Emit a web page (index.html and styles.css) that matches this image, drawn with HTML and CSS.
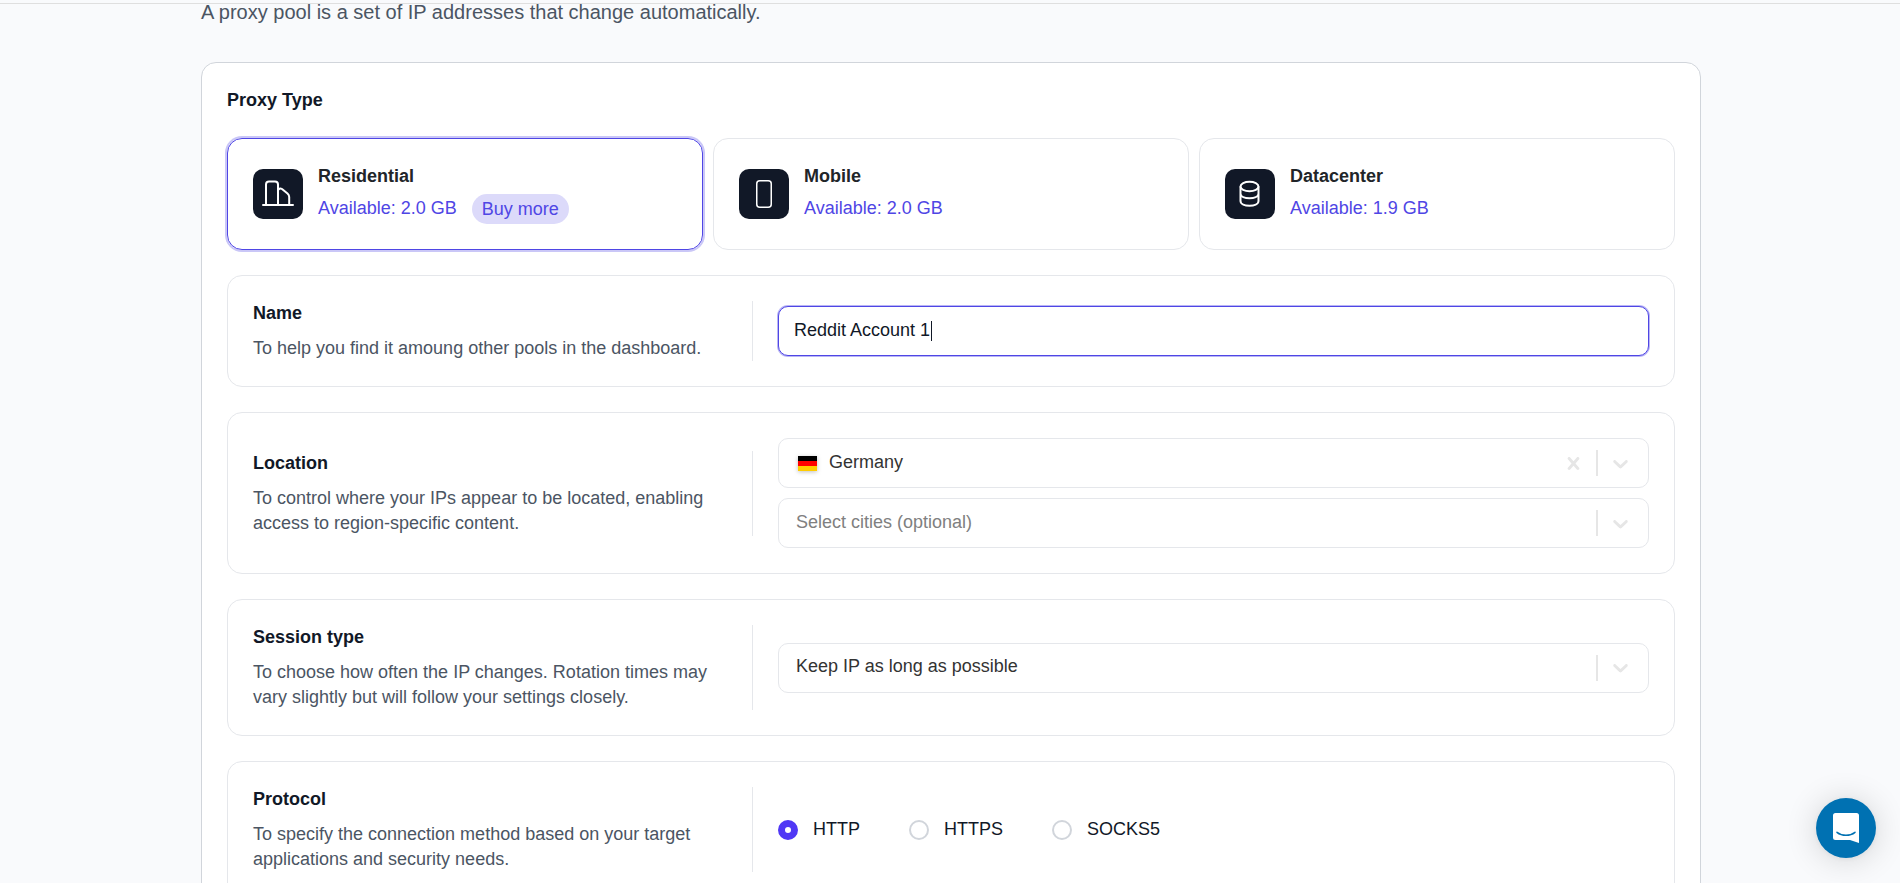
FILE: index.html
```html
<!DOCTYPE html>
<html lang="en">
<head>
<meta charset="utf-8">
<title>Create proxy pool</title>
<link rel="stylesheet" href="styles.css">
</head>
<body>
<header class="topbar"></header>
<main class="page">
  <p class="lead">A proxy pool is a set of IP addresses that change automatically.</p>
  <form class="panel">
    <h2 class="label">Proxy Type</h2>
    <div class="types">
      <article class="type selected">
        <span class="type-icon">
          <svg width="32" height="32" viewBox="0 0 32 32" fill="none" stroke="#fff" stroke-width="2" stroke-linecap="round" stroke-linejoin="round"><path d="M1 27h30M4 27V6.500q0-3 3-3h6q3 0 3 3V27M16.500 11.500q1.500-1.700 3.500-.5l5.500 4.500q1.700 1.500 1.700 3.500v8"/></svg>
        </span>
        <div class="type-text">
          <h3 class="type-name">Residential</h3>
          <div class="type-row"><span class="available">Available: 2.0 GB</span><button type="button" class="buy">Buy more</button></div>
        </div>
      </article>
      <article class="type">
        <span class="type-icon">
          <svg width="32" height="32" viewBox="0 0 32 32" fill="none" stroke="#fff" stroke-width="1.500"><rect x="8.750" y="2.750" width="14.500" height="26.500" rx="3"/></svg>
        </span>
        <div class="type-text">
          <h3 class="type-name">Mobile</h3>
          <div class="type-row"><span class="available">Available: 2.0 GB</span></div>
        </div>
      </article>
      <article class="type">
        <span class="type-icon">
          <svg width="32" height="32" viewBox="0 0 32 32" fill="none" stroke="#fff" stroke-width="2"><ellipse cx="15.500" cy="8.500" rx="9" ry="4.700"/><path d="M6.500 8.500v14.500c0 6.300 18 6.300 18 0V8.500M6.500 15.500c0 6.300 18 6.300 18 0"/></svg>
        </span>
        <div class="type-text">
          <h3 class="type-name">Datacenter</h3>
          <div class="type-row"><span class="available">Available: 1.9 GB</span></div>
        </div>
      </article>
    </div>

    <section class="setting">
      <div class="about">
        <label class="label" for="name">Name</label>
        <p class="hint">To help you find it amoung other pools in the dashboard.</p>
      </div>
      <div class="fields">
        <div class="picker">
          <input class="text-input" id="name" type="text" value="Reddit Account 1">
          <span class="caret"></span>
        </div>
      </div>
    </section>

    <section class="setting">
      <div class="about">
        <label class="label" for="country">Location</label>
        <p class="hint">To control where your IPs appear to be located, enabling access to region-specific content.</p>
      </div>
      <div class="fields">
        <div class="picker">
          <select id="country" class="with-flag"><option>Germany</option></select>
          <svg class="flag" width="19" height="15" viewBox="0 0 19 15"><path d="M0 0h19v5H0z" fill="#000"/><path d="M0 5h19v5H0z" fill="#f00"/><path d="M0 10h19v5H0z" fill="#fc0"/></svg>
          <div class="marks">
            <button type="button" class="clear" aria-label="Clear"><svg width="25" height="25" viewBox="0 0 20 20" fill="currentColor"><path d="M14.348 14.849c-0.469 0.469-1.229 0.469-1.697 0l-2.651-3.030-2.651 3.029c-0.469 0.469-1.229 0.469-1.697 0-0.469-0.469-0.469-1.229 0-1.697l2.758-3.15-2.759-3.152c-0.469-0.469-0.469-1.228 0-1.697s1.228-0.469 1.697 0l2.652 3.031 2.651-3.031c0.469-0.469 1.228-0.469 1.697 0s0.469 1.229 0 1.697l-2.758 3.152 2.758 3.150c0.469 0.469 0.469 1.229 0 1.698z"/></svg></button>
            <span class="bar"></span>
            <svg width="25" height="25" viewBox="0 0 20 20" fill="currentColor"><path d="M4.516 7.548c0.436-0.446 1.043-0.481 1.576 0l3.908 3.747 3.908-3.747c0.533-0.481 1.141-0.446 1.574 0 0.436 0.445 0.408 1.197 0 1.615-0.406 0.418-4.695 4.502-4.695 4.502-0.217 0.223-0.502 0.335-0.787 0.335s-0.570-0.112-0.789-0.335c0 0-4.287-4.084-4.695-4.502s-0.436-1.170 0-1.615z"/></svg>
          </div>
        </div>
        <div class="picker">
          <select class="empty" aria-label="Cities"><option>Select cities (optional)</option></select>
          <div class="marks">
            <span class="bar"></span>
            <svg width="25" height="25" viewBox="0 0 20 20" fill="currentColor"><path d="M4.516 7.548c0.436-0.446 1.043-0.481 1.576 0l3.908 3.747 3.908-3.747c0.533-0.481 1.141-0.446 1.574 0 0.436 0.445 0.408 1.197 0 1.615-0.406 0.418-4.695 4.502-4.695 4.502-0.217 0.223-0.502 0.335-0.787 0.335s-0.570-0.112-0.789-0.335c0 0-4.287-4.084-4.695-4.502s-0.436-1.170 0-1.615z"/></svg>
          </div>
        </div>
      </div>
    </section>

    <section class="setting">
      <div class="about">
        <label class="label" for="session">Session type</label>
        <p class="hint">To choose how often the IP changes. Rotation times may vary slightly but will follow your settings closely.</p>
      </div>
      <div class="fields">
        <div class="picker">
          <select id="session"><option>Keep IP as long as possible</option></select>
          <div class="marks">
            <span class="bar"></span>
            <svg width="25" height="25" viewBox="0 0 20 20" fill="currentColor"><path d="M4.516 7.548c0.436-0.446 1.043-0.481 1.576 0l3.908 3.747 3.908-3.747c0.533-0.481 1.141-0.446 1.574 0 0.436 0.445 0.408 1.197 0 1.615-0.406 0.418-4.695 4.502-4.695 4.502-0.217 0.223-0.502 0.335-0.787 0.335s-0.570-0.112-0.789-0.335c0 0-4.287-4.084-4.695-4.502s-0.436-1.170 0-1.615z"/></svg>
          </div>
        </div>
      </div>
    </section>

    <section class="setting">
      <div class="about">
        <h2 class="label" id="protocol">Protocol</h2>
        <p class="hint">To specify the connection method based on your target applications and security needs.</p>
      </div>
      <div class="radios" role="radiogroup" aria-labelledby="protocol">
        <label class="choice"><input type="radio" name="protocol" checked>HTTP</label>
        <label class="choice"><input type="radio" name="protocol">HTTPS</label>
        <label class="choice"><input type="radio" name="protocol">SOCKS5</label>
      </div>
    </section>
  </form>
</main>
<button type="button" class="chat" aria-label="Open chat">
  <svg width="28" height="32" viewBox="0 0 28 32"><path d="M3.500 1h21Q27 1 27 3.500V31L18 28H3.500Q1 28 1 25.500v-22Q1 1 3.500 1z" fill="#fff"/><path d="M5 20.300c5 4 13 4 18 0" fill="none" stroke="#0071b2" stroke-width="1.500" stroke-linecap="round"/></svg>
</button>
</body>
</html>
```
FILE: styles.css
```css
* { box-sizing: border-box; }

body {
  margin: 0;
  padding-left: 2px;
  height: 100vh;
  overflow: hidden;
  background: #f9fafc;
  color: #111827;
  font-family: "Liberation Sans", Arial, sans-serif;
  font-size: 18px;
  line-height: 25px;
}

h2, h3, p { margin: 0; }

input, select, button { font: inherit; color: inherit; }

.topbar {
  height: 4px;
  margin-left: -2px;
  background: #f9fafc;
  border-bottom: 1px solid #dfdfdf;
}

.page {
  max-width: 1500px;
  margin: 0 auto;
}

.lead {
  font-size: 20px;
  line-height: 16px;
  color: #4b5563;
}

.panel {
  display: flex;
  flex-direction: column;
  gap: 25px;
  margin-top: 42px;
  padding: 25px;
  background: #fff;
  border: 1px solid #d1d5db;
  border-radius: 15px;
}

.label {
  display: block;
  font-size: 18px;
  font-weight: 700;
}

.types {
  display: grid;
  grid-template-columns: repeat(3, 1fr);
  gap: 10px;
}

.type {
  display: flex;
  align-items: center;
  gap: 15px;
  padding: 25px;
  border: 1px solid #e5e7eb;
  border-radius: 15px;
}

.type.selected {
  border-color: #4f46e5;
  box-shadow: 0 0 0 2px #cac7f7;
}

.type-icon {
  display: grid;
  place-items: center;
  width: 50px;
  height: 50px;
  background: #111827;
  border-radius: 10px;
}

.type-text { display: grid; gap: 5px; }

.type-name {
  font-size: 18px;
  color: #212529;
}

.type-row {
  display: flex;
  align-items: center;
  gap: 15px;
  height: 30px;
  color: #4f46e5;
}

.available { padding-bottom: 2px; }

.buy {
  height: 30px;
  padding: 0 10px;
  background: #dcdafa;
  border: 0;
  border-radius: 15px;
}

.setting {
  display: grid;
  grid-template-columns: 500px 1fr;
  align-items: center;
  gap: 25px;
  padding: 25px;
  border: 1px solid #e5e7eb;
  border-radius: 15px;
}

.about {
  display: grid;
  gap: 10px;
  padding-right: 25px;
  border-right: 1px solid #e5e7eb;
}

.hint { color: #4b5563; }

.fields { display: grid; gap: 10px; }

.picker {
  display: grid;
  align-items: center;
}

.picker > * { grid-area: 1 / 1; }

.text-input {
  width: 100%;
  height: 50px;
  padding: 0 15px 2px;
  background: #fff;
  border: 1px solid #4f46e5;
  border-radius: 10px;
  box-shadow: 0 0 0 1px #b9b5f5;
  outline: 0;
  caret-color: transparent;
}

.caret {
  width: 1px;
  height: 20px;
  margin-left: 153px;
  background: #111827;
  pointer-events: none;
}

.picker select {
  appearance: none;
  width: 100%;
  height: 50px;
  padding: 0 100px 2px 17px;
  background: #fff;
  border: 1px solid #e5e7eb;
  border-radius: 10px;
  color: #333;
}

.picker .with-flag { padding-left: 50px; }

.picker .empty { color: #808080; }

.flag {
  margin-left: 20px;
  pointer-events: none;
  filter: drop-shadow(0 1px 2px rgb(0 0 0 / 25%));
}

.marks {
  display: flex;
  align-items: center;
  justify-self: end;
  gap: 10px;
  margin-right: 16px;
  color: #e6e6e6;
  pointer-events: none;
}

.marks svg { display: block; }

.clear {
  padding: 0;
  background: none;
  border: 0;
  pointer-events: auto;
}

.bar {
  width: 2px;
  height: 26px;
  background: #e6e6e6;
}

.radios { display: flex; gap: 49px; }

.choice {
  display: flex;
  align-items: center;
  gap: 15px;
}

.choice input {
  appearance: none;
  width: 20px;
  height: 20px;
  margin: 0;
  background: #fff;
  border: 2px solid #d1d5db;
  border-radius: 50%;
}

.choice input:checked { border: 7px solid #5038f5; }

.chat {
  position: fixed;
  right: 24px;
  bottom: 25px;
  display: grid;
  place-items: center;
  width: 60px;
  height: 60px;
  padding: 0;
  background: #0071b2;
  border: 0;
  border-radius: 50%;
  box-shadow: 0 1px 6px rgb(0 0 0 / 6%), 0 2px 32px rgb(0 0 0 / 16%);
}
```
